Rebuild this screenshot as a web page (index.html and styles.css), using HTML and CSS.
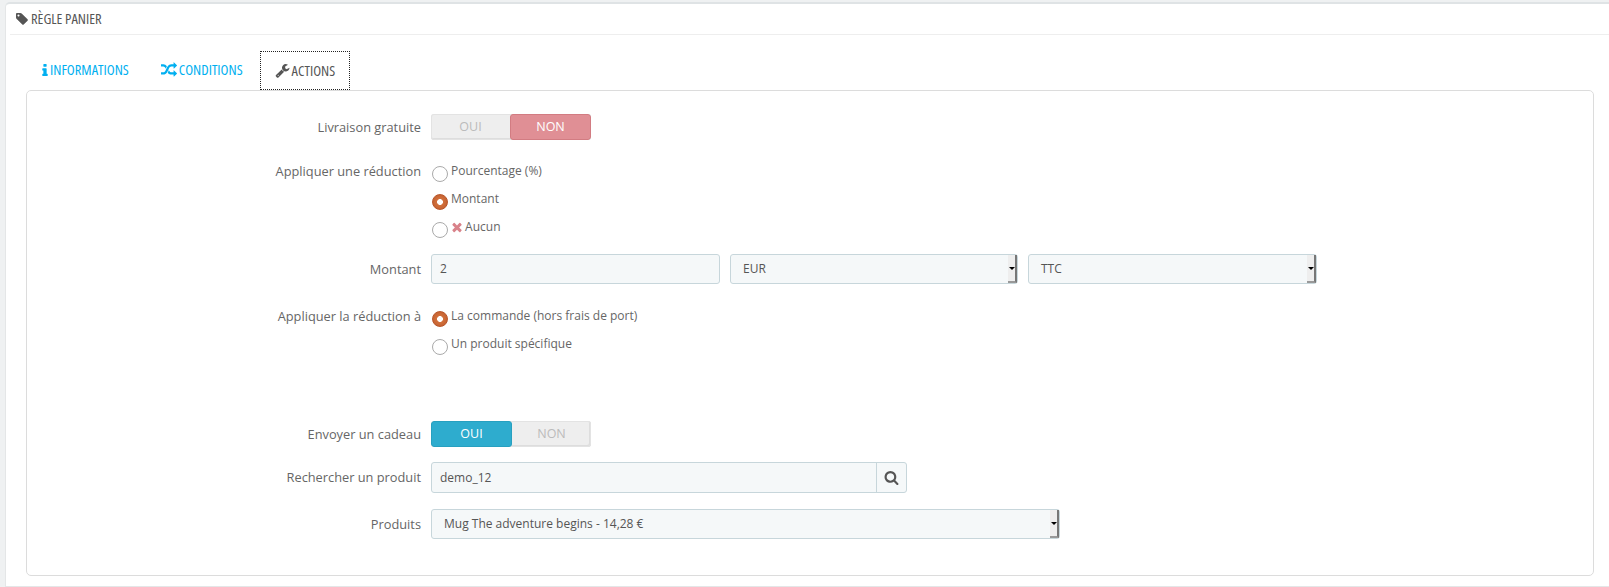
FILE: index.html
```html
<!DOCTYPE html>
<html lang="fr">
<head>
<meta charset="utf-8">
<title>Règle panier</title>
<link rel="stylesheet" href="styles.css">
</head>
<body>
<div class="panel">
  <h3 class="panel-title">
    <svg class="ico ico-title" viewBox="0 0 1792 1792"><path d="M576 448q0-53-37.500-90.500t-90.500-37.500-90.500 37.500-37.500 90.500 37.500 90.500 90.500 37.500 90.500-37.500 37.500-90.500zm1067 576q0 53-37 90l-491 492q-39 37-91 37-53 0-90-37l-715-716q-38-37-64.500-101t-26.500-117v-416q0-52 38-90t90-38h416q53 0 117 26.500t102 64.500l715 714q37 39 37 91z"/></svg>
    <span>RÈGLE PANIER</span>
  </h3>
  <ul class="tabs">
    <li class="tab tab-info"><svg class="ico ico-info" viewBox="576 128 640 1408"><path d="M1216 1344v128q0 26-19 45t-45 19h-512q-26 0-45-19t-19-45v-128q0-26 19-45t45-19h64v-384h-64q-26 0-45-19t-19-45v-128q0-26 19-45t45-19h384q26 0 45 19t19 45v576h64q26 0 45 19t19 45zm-128-1152v192q0 26-19 45t-45 19h-256q-26 0-45-19t-19-45v-192q0-26 19-45t45-19h256q26 0 45 19t19 45z"/></svg>INFORMATIONS</li>
    <li class="tab tab-cond"><svg class="ico" viewBox="0 0 1792 1792"><path d="M666 481q-60 92-137 273-22-45-37-72.500t-40.500-63.500-51-56.500-63-35-81.500-14.500h-224q-14 0-23-9t-9-23v-192q0-14 9-23t23-9h224q250 0 410 225zm1126 799q0 14-9 23l-320 320q-9 9-23 9-13 0-22.500-9.500t-9.500-22.500v-192q-32 0-85 .5t-81 1-73-1-71-5-64-10.500-63-18.500-58-28.500-59-40-55-53.500-56-69.500q59-93 136-273 22 45 37 72.500t40.500 63.500 51 56.500 63 35 81.500 14.500h256v-192q0-14 9-23t23-9q12 0 24 10l319 319q9 9 9 23zm0-896q0 14-9 23l-320 320q-9 9-23 9-13 0-22.500-9.500t-9.500-22.500v-192h-256q-48 0-87 15t-69 45-51 61.500-45 77.500q-32 62-78 171-29 66-49.500 111t-54 105-64 100-74 83-90 68.500-106.500 42-128 16.500h-224q-14 0-23-9t-9-23v-192q0-14 9-23t23-9h224q48 0 87-15t69-45 51-61.500 45-77.500q32-62 78-171 29-66 49.500-111t54-105 64-100 74-83 90-68.500 106.500-42 128-16.500h256v-192q0-14 9-23t23-9q12 0 24 10l319 319q9 9 9 23z"/></svg>CONDITIONS</li>
    <li class="tab tab-active"><svg class="ico" viewBox="0 0 1792 1792"><path d="M448 1472q0-26-19-45t-45-19-45 19-19 45 19 45 45 19 45-19 19-45zm644-420l-682 682q-37 37-90 37-52 0-91-37l-106-108q-38-36-38-90 0-53 38-91l681-681q39 98 114.500 173.500t173.500 114.500zm634-435q0 39-23 106-47 134-164.500 217.500t-258.500 83.500q-185 0-316.500-131.500t-131.500-316.500 131.500-316.500 316.500-131.500q58 0 121.500 16.500t107.500 46.500q16 11 16 28t-16 28l-293 169v224l193 107q5-3 79-48.500t135.500-81 70.500-35.500q15 0 23.500 10t8.500 25z"/></svg>ACTIONS</li>
  </ul>
  <div class="card">
    <div class="row row-free">
      <label class="lbl">Livraison gratuite</label>
      <div class="toggle">
        <span class="opt off">OUI</span>
        <span class="opt on-red">NON</span>
      </div>
    </div>
    <div class="row row-reduc">
      <label class="lbl lbl-radio">Appliquer une réduction</label>
      <div class="radios">
        <div class="radio"><span class="dot"></span><span class="rtxt">Pourcentage (%)</span></div>
        <div class="radio"><span class="dot checked"></span><span class="rtxt">Montant</span></div>
        <div class="radio"><span class="dot"></span><span class="rtxt"><svg class="ico ico-x" viewBox="0 0 1792 1792"><path d="M1490 1322q0 40-28 68l-136 136q-28 28-68 28t-68-28l-294-294-294 294q-28 28-68 28t-68-28l-136-136q-28-28-28-68t28-68l294-294-294-294q-28-28-28-68t28-68l136-136q28-28 68-28t68 28l294 294 294-294q28-28 68-28t68 28l136 136q28 28 28 68t-28 68l-294 294 294 294q28 28 28 68z"/></svg> Aucun</span></div>
      </div>
    </div>
    <div class="row row-amount">
      <label class="lbl">Montant</label>
      <div class="amount">
        <div class="field">2</div>
        <div class="select">EUR<span class="arrow"></span></div>
        <div class="select">TTC<span class="arrow"></span></div>
      </div>
    </div>
    <div class="row row-apply">
      <label class="lbl lbl-radio">Appliquer la réduction à</label>
      <div class="radios">
        <div class="radio"><span class="dot checked"></span><span class="rtxt">La commande (hors frais de port)</span></div>
        <div class="radio"><span class="dot"></span><span class="rtxt">Un produit spécifique</span></div>
      </div>
    </div>
    <div class="row row-gift">
      <label class="lbl">Envoyer un cadeau</label>
      <div class="toggle">
        <span class="opt on-blue">OUI</span>
        <span class="opt off">NON</span>
      </div>
    </div>
    <div class="row row-search">
      <label class="lbl">Rechercher un produit</label>
      <div class="search">
        <div class="search-input">demo_12</div>
        <div class="search-btn"><svg class="ico" viewBox="0 0 1792 1792"><path d="M1216 832q0-185-131.500-316.500t-316.500-131.500-316.500 131.500-131.500 316.500 131.500 316.500 316.500 131.500 316.500-131.500 131.500-316.500zm512 832q0 52-38 90t-90 38q-54 0-90-38l-343-342q-179 124-399 124-143 0-273.500-55.500t-225-150-150-225-55.500-273.500 55.500-273.500 150-225 225-150 273.500-55.500 273.500 55.500 225 150 150 225 55.500 273.500q0 220-124 399l343 343q37 37 37 90z"/></svg></div>
      </div>
    </div>
    <div class="row row-products">
      <label class="lbl">Produits</label>
      <div class="select select-wide">Mug The adventure begins - 14,28 €<span class="arrow"></span></div>
    </div>
  </div>
</div>
</body>
</html>
```
FILE: styles.css
```css
* { box-sizing: border-box; }
html, body { margin: 0; height: 587px; overflow: hidden; }
body {
  background: #eff1f2;
  padding: 2px 0 0 5px;
  font-family: "Open Sans", sans-serif;
  font-size: 12px;
  color: #666;
}
.panel {
  background: #fff;
  border: 1px solid #e4e6e7;
  border-top: 2px solid #dfe3e5;
  border-right: 0;
  border-radius: 5px 0 0 0;
  height: 585px;
  overflow: hidden;
  padding: 0 0 0 4px;
}
.panel-title {
  margin: 0;
  height: 31px;
  border-bottom: 1px solid #eee;
  display: flex;
  align-items: center;
  gap: 2px;
  padding: 0 0 1px 5px;
  font-family: "Open Sans", sans-serif;
  font-stretch: 75%;
  font-size: 14.5px;
  font-weight: 400;
  color: #555;
}
.ico { width: 14px; height: 14px; fill: currentColor; flex: none; }
.ico-title { width: 14px; height: 14px; color: #555; }
.ico-info { width: 6px; height: 12px; }
.tabs {
  list-style: none;
  margin: 16px 0 0 17px;
  padding: 0;
  display: flex;
  height: 39px;
  position: relative;
  z-index: 1;
}
.tab {
  display: flex;
  align-items: center;
  gap: 2px;
  padding: 0 15px 2px;
  color: #00aff0;
  font-family: "Open Sans", sans-serif;
  font-stretch: 75%;
  font-size: 14.5px;
}
.tab-cond { margin-left: 2px; }
.tab-cond .ico { width: 16px; height: 16px; }
.tab-active {
  margin-left: 2px;
  color: #555;
  background: #fff;
  border: 1px dotted #222;
  padding: 0 14px 1px;
}
.tab-active .ico { width: 15px; height: 15px; }
.card {
  margin-left: 16px;
  width: 1568px;
  height: 486px;
  background: #fff;
  border: 1px solid #dcdcdc;
  border-radius: 5px;
  padding-top: 23px;
  margin-top: -0.5px;
}
.row { display: grid; grid-template-columns: 394px 1fr; column-gap: 10px; align-items: center; }
.lbl { text-align: right; font-size: 12.8px; color: #666; }
.lbl-radio { align-self: start; padding-top: 1px; }
.toggle { display: flex; width: 160px; height: 26px; border-radius: 3px; overflow: hidden; background: #eee; box-shadow: inset 0 0 0 1px #e3e3e3, inset -1px -1px 0 1px #ddd; }
.opt { flex: 1 1 0; display: flex; align-items: center; justify-content: center; font-size: 12.5px; }
.off { color: #bbb; }
.on-red { background: #e08f95; border: 1px solid #d27c82; border-radius: 3px; color: #fff; }
.on-blue { background: #2eacce; border: 1px solid #27a0c0; border-radius: 3px; color: #fff; }
.row-reduc { margin-top: 21px; }
.radios { display: flex; flex-direction: column; gap: 0; }
.radio { display: flex; height: 28px; gap: 3px; font-size: 12px; color: #666; align-items: flex-start; }
.rtxt { line-height: 16px; padding-top: 2px; }
.dot { width: 16px; height: 16px; margin: 5px 0 0 1px; border-radius: 50%; border: 1px solid #aaa; background: #fff; flex: none; }
.dot.checked { border: 1px solid #b9562a; background: radial-gradient(circle, #fff 0 2.6px, #d2703c 3.2px, #bd5a2a 100%); }
.ico-x { color: #d9828a; width: 14px; height: 14px; vertical-align: -3px; margin: 0 -2px 0 -1px; }
.row-amount { margin-top: 9px; }
.amount { display: grid; grid-template-columns: 289px 288px 289px; column-gap: 10px; }
.field, .select, .search {
  height: 30px;
  background: #f5f8f9;
  border: 1px solid #c7d6db;
  border-radius: 3px;
  color: #555;
  font-size: 12px;
}
.field, .select { display: flex; align-items: center; padding-left: 8px; position: relative; }
.select { padding-left: 12px; }
.arrow { position: absolute; right: 0; top: 0; bottom: 0; width: 9px; background: #eee; border-right: 2px solid #777; border-bottom: 2px solid #999; }
.arrow::after { content: ""; position: absolute; left: 1px; top: 12px; border: 3px solid transparent; border-top: 3px solid #000; }
.row-apply { margin-top: 22px; }
.row-gift { margin-top: 59px; }
.row-search { margin-top: 15px; }
.search { display: flex; width: 476px; height: 31px; }
.search-input { flex: 1; display: flex; align-items: center; padding-left: 8px; }
.search-btn { width: 30px; border-left: 1px solid #c7d6db; display: flex; align-items: center; justify-content: center; color: #555; }
.search-btn .ico { width: 15px; height: 15px; }
.row-products { margin-top: 16px; }
.select-wide { width: 629px; }
```
